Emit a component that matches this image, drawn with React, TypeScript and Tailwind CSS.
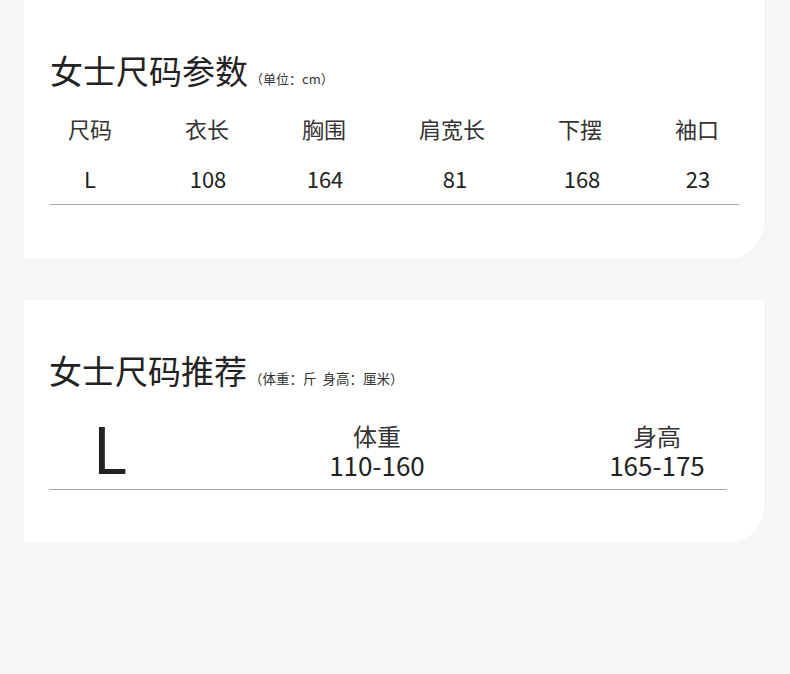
import React from "react";

const headers = ["尺码", "衣长", "胸围", "肩宽长", "下摆", "袖口"];
const values = ["L", "108", "164", "81", "168", "23"];
const hGaps = ["ml-0", "ml-[37px]", "ml-[37px]", "ml-[48px]", "ml-[48px]", "ml-[37px]"];
const vGaps = ["ml-0", "ml-[38px]", "ml-[37px]", "ml-[50px]", "ml-[47px]", "ml-[36px]"];

export default function App() {
  return (
    <div className="w-[790px] h-[674px] bg-[#f6f6f6] text-[#222] font-['Noto_Sans_CJK_SC','Noto_Sans',sans-serif] overflow-hidden">
      <div className="ml-[24px] w-[740px] h-[259px] bg-white rounded-br-[36px] pl-[26px] pt-[54px]">
        <div className="flex items-baseline">
          <span className="text-[33px] leading-[33px]">女士尺码参数</span>
          <span className="text-[13px] ml-[2px] text-[#333]">（单位：cm）</span>
        </div>
        <div className="w-[689px] mt-[24px] border-b border-[#a8a8a8] pb-[11px]">
          <div className="flex h-[30px] items-center text-[22px]">
            {headers.map((h, i) => (
              <div key={h} className={`w-[80px] shrink-0 text-center leading-[30px] text-[#333] ${hGaps[i]}`}>{h}</div>
            ))}
          </div>
          <div className="flex h-[30px] items-center text-[22px] mt-[20px]">
            {values.map((v, i) => (
              <div key={i} className={`w-[80px] shrink-0 text-center leading-[30px] ${vGaps[i]}`}>{v}</div>
            ))}
          </div>
        </div>
      </div>
      <div className="ml-[24px] mt-[41px] w-[740px] h-[243px] bg-white rounded-br-[36px] pl-[25px] pt-[54px]">
        <div className="flex items-baseline">
          <span className="text-[33px] leading-[33px]">女士尺码推荐</span>
          <span className="text-[13.5px] ml-[2px] text-[#333] whitespace-pre">（体重：斤  身高：厘米）</span>
        </div>
        <div className="w-[678px] mt-[25px] border-b border-[#a8a8a8] pb-[10px] flex items-end">
          <div className="w-[122px] shrink-0 text-center text-[64px] leading-[66px] font-normal">L</div>
          <div className="ml-[136px] w-[140px] shrink-0 text-center">
            <div className="text-[24px] leading-[28px] text-[#333]">体重</div>
            <div className="text-[26px] leading-[29px]">110-160</div>
          </div>
          <div className="ml-[140px] w-[140px] shrink-0 text-center">
            <div className="text-[24px] leading-[28px] text-[#333]">身高</div>
            <div className="text-[26px] leading-[29px]">165-175</div>
          </div>
        </div>
      </div>
    </div>
  );
}
